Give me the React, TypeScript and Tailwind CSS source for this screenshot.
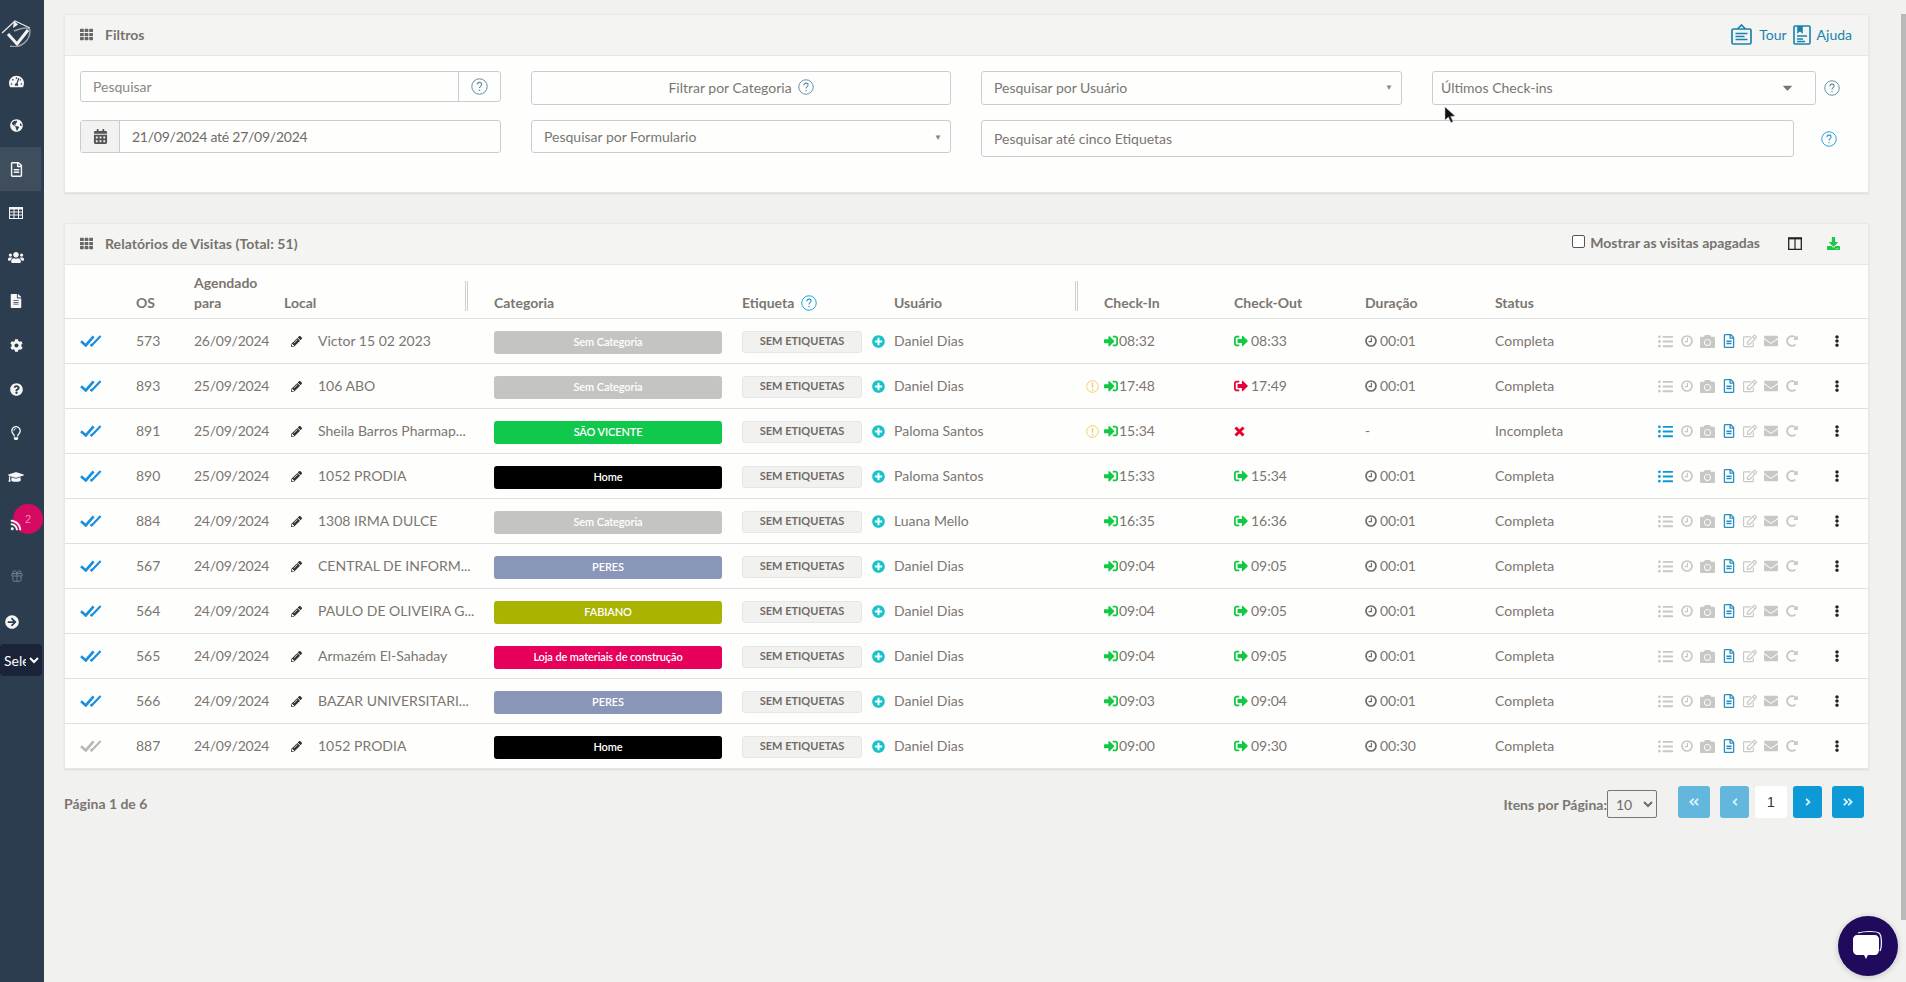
import React from "react";
import {
  FaTh, FaTachometerAlt, FaGlobeAmericas, FaRegFileAlt, FaUsers, FaFileAlt, FaCog, FaQuestionCircle,
  FaRegLightbulb, FaGraduationCap, FaRss, FaArrowCircleRight, FaCalendarAlt, FaPencilAlt, FaPlusCircle,
  FaSignInAlt, FaSignOutAlt, FaListUl, FaCamera, FaRegEdit, FaEnvelope, FaRedoAlt,
  FaEllipsisV, FaDownload, FaCaretDown, FaAngleDoubleLeft, FaAngleDoubleRight, FaAngleLeft, FaAngleRight,
} from "react-icons/fa";
import { Gift } from "lucide-react";

const cols = "grid grid-cols-[71px_58px_90px_210px_248px_152px_184px_26px_130px_131px_130px_160px_1fr]";

type Row = {
  os: string; date: string; name: string; cat: string; bar: string; user: string; warn?: boolean;
  inT: string; outT?: string; outRed?: boolean; dur: string; status: string; list?: boolean; grey?: boolean;
};

const GREY = "bg-[#c4c4c2]";
const rows: Row[] = [
  { os: "573", date: "26/09/2024", name: "Victor 15 02 2023", cat: "Sem Categoria", bar: GREY, user: "Daniel Dias", inT: "08:32", outT: "08:33", dur: "00:01", status: "Completa" },
  { os: "893", date: "25/09/2024", name: "106 ABO", cat: "Sem Categoria", bar: GREY, user: "Daniel Dias", warn: true, inT: "17:48", outT: "17:49", outRed: true, dur: "00:01", status: "Completa" },
  { os: "891", date: "25/09/2024", name: "Sheila Barros Pharmap...", cat: "SÃO VICENTE", bar: "bg-[#0fc84c]", user: "Paloma Santos", warn: true, inT: "15:34", dur: "-", status: "Incompleta", list: true },
  { os: "890", date: "25/09/2024", name: "1052 PRODIA", cat: "Home", bar: "bg-black", user: "Paloma Santos", inT: "15:33", outT: "15:34", dur: "00:01", status: "Completa", list: true },
  { os: "884", date: "24/09/2024", name: "1308 IRMA DULCE", cat: "Sem Categoria", bar: GREY, user: "Luana Mello", inT: "16:35", outT: "16:36", dur: "00:01", status: "Completa" },
  { os: "567", date: "24/09/2024", name: "CENTRAL DE INFORM...", cat: "PERES", bar: "bg-[#8a96b8]", user: "Daniel Dias", inT: "09:04", outT: "09:05", dur: "00:01", status: "Completa" },
  { os: "564", date: "24/09/2024", name: "PAULO DE OLIVEIRA G...", cat: "FABIANO", bar: "bg-[#a9b300]", user: "Daniel Dias", inT: "09:04", outT: "09:05", dur: "00:01", status: "Completa" },
  { os: "565", date: "24/09/2024", name: "Armazém El-Sahaday", cat: "Loja de materiais de construção", bar: "bg-[#e6005c]", user: "Daniel Dias", inT: "09:04", outT: "09:05", dur: "00:01", status: "Completa" },
  { os: "566", date: "24/09/2024", name: "BAZAR UNIVERSITARI...", cat: "PERES", bar: "bg-[#8a96b8]", user: "Daniel Dias", inT: "09:03", outT: "09:04", dur: "00:01", status: "Completa" },
  { os: "887", date: "24/09/2024", name: "1052 PRODIA", cat: "Home", bar: "bg-black", user: "Daniel Dias", inT: "09:00", outT: "09:30", dur: "00:30", status: "Completa", grey: true },
];

function Help({ className }: { className: string }) {
  return (
    <svg viewBox="0 0 17 17" className={className} fill="none" stroke="currentColor">
      <circle cx="8.5" cy="8.5" r="7.7" strokeWidth="1" />
      <path d="M6.3 6.6c0-1.4 1-2.2 2.2-2.2s2.2.8 2.2 2c0 1.6-2.2 1.8-2.2 3.6" strokeWidth="1.1" />
      <path d="M8.5 11.6v1.4" strokeWidth="1.2" />
    </svg>
  );
}

function Clock({ className }: { className: string }) {
  return (
    <svg viewBox="0 0 12 12" className={className} fill="none" stroke="currentColor">
      <circle cx="6" cy="6" r="5" strokeWidth="1.7" />
      <path d="M6.4 2.8V6.6H3.6" strokeWidth="1.2" />
    </svg>
  );
}

function DoubleCheck({ grey }: { grey?: boolean }) {
  return (
    <svg viewBox="0 0 22 12" className={`w-[22px] h-[12px] ${grey ? "text-[#b8b8b6]" : "text-[#1a8fe0]"}`} fill="none" stroke="currentColor">
      <path d="M1 6.2 L5.8 10.4 L13.6 1.4" strokeWidth="2.7" />
      <path d="M10.4 9.4 L11.6 10.4 L20.6 1" strokeWidth="2.2" />
    </svg>
  );
}

function Logo() {
  return (
    <svg viewBox="0 0 36 36" className="w-[36px] h-[36px]" fill="none">
      <path d="M2 22 L15 10 L30 17" stroke="#e8e8e8" strokeWidth="1.2" />
      <path d="M14 10 L18 13.5 L13 17 Z" fill="#f4f4f4" />
      <path d="M8 23 L17 33 L28 19" stroke="#f2f2f2" strokeWidth="3" />
      <path d="M10 35 C20 38 30 30 30 20 C30 16 24 16 14 20" stroke="#9aa3aa" strokeWidth="1.4" />
    </svg>
  );
}

function TourIcon() {
  return (
    <svg viewBox="0 0 21 21" className="w-[21px] h-[21px] text-[#1a82ad]" fill="none" stroke="currentColor" strokeWidth="1.7">
      <rect x="1" y="5" width="19" height="15" rx="1.5" />
      <path d="M6.5 5 L10.5 1 L14.5 5" />
      <path d="M4.5 9.5h12M4.5 12.5h9M4.5 15.5h12" strokeWidth="1.4" />
    </svg>
  );
}

function HelpDocIcon() {
  return (
    <svg viewBox="0 0 18 20" className="w-[18px] h-[20px] text-[#1a82ad]" fill="none" stroke="currentColor" strokeWidth="1.6">
      <rect x="1" y="1" width="16" height="18" rx="1" />
      <path d="M5 1v6l2-1.6L9 7V1" fill="currentColor" />
      <path d="M4 11h10M4 14h6M4 16.5h8" strokeWidth="1.3" />
    </svg>
  );
}

function TableGlyph() {
  return (
    <svg viewBox="0 0 14 12" className="w-[14px] h-[12px]" fill="none" stroke="#f6f6f6">
      <rect x="0.5" y="0.5" width="13" height="11" />
      <path d="M0 1.5h14" strokeWidth="2" />
      <path d="M0 5h14M0 8h14M5 1v10M9.5 1v10" />
    </svg>
  );
}

function ColumnsGlyph() {
  return (
    <svg viewBox="0 0 14 13" className="w-[14px] h-[13px] text-[#222]" fill="none" stroke="currentColor">
      <rect x="0.7" y="1" width="12.6" height="11.4" strokeWidth="1.3" />
      <path d="M0 1.5h14" strokeWidth="1.8" />
      <path d="M7 1v11" strokeWidth="1.2" />
    </svg>
  );
}

function SideItem({ children, active }: { children: React.ReactNode; active?: boolean }) {
  return (
    <div className={`h-[44px] w-[41px] pl-[8px] flex items-center ${active ? "bg-[#3f4e5d]" : ""}`}>
      <span className="w-[16px] flex justify-center">{children}</span>
    </div>
  );
}

function Sidebar() {
  const c = "text-[#f6f6f6] text-[14px]";
  return (
    <aside className="w-[44px] shrink-0 bg-[#2b3d4f] flex flex-col">
      <div className="h-[59px] pt-[11px]">
        <Logo />
      </div>
      <SideItem><FaTachometerAlt className="text-[#f6f6f6] text-[15px]" /></SideItem>
      <SideItem><FaGlobeAmericas className="text-[#f6f6f6] text-[13px]" /></SideItem>
      <SideItem active><FaRegFileAlt className="text-[#f6f6f6] text-[15px]" /></SideItem>
      <SideItem><TableGlyph /></SideItem>
      <SideItem><FaUsers className="text-[#f6f6f6] text-[17px]" /></SideItem>
      <SideItem><FaFileAlt className={c} /></SideItem>
      <SideItem><FaCog className="text-[#f6f6f6] text-[13px]" /></SideItem>
      <SideItem><FaQuestionCircle className="text-[#f6f6f6] text-[13px]" /></SideItem>
      <SideItem><FaRegLightbulb className={c} /></SideItem>
      <SideItem><FaGraduationCap className="text-[#f6f6f6] text-[18px]" /></SideItem>
      <div className="h-[44px] relative">
        <span className="absolute left-[13px] top-[5px] w-[30px] h-[30px] rounded-full bg-[#d60a62] text-[#f48ab8] text-[11px] flex items-center justify-center [font-family:'Liberation_Sans',sans-serif]">
          2
        </span>
        <FaRss className="absolute left-[10px] top-[20px] text-[#f6f6f6] text-[12px]" />
      </div>
      <div className="h-[44px] mt-[11px] pl-[10px] flex items-center">
        <Gift className="w-[14px] h-[14px] text-[#7e8b98]" strokeWidth={1.4} />
      </div>
      <div className="h-[44px] pl-[5px] flex items-center mt-[2px]">
        <FaArrowCircleRight className="text-[#f6f6f6] text-[14px]" />
      </div>
      <select className="block w-[42px] h-[32px] rounded-[4px] bg-[#1a2338] text-white text-[14px] p-0 outline-none [font-family:Lato,sans-serif]">
        <option>Selecione</option>
      </select>
    </aside>
  );
}

function FakeSelect({ label, h, lift }: { label: string; h: string; lift?: boolean }) {
  return (
    <div className={`${h} ${lift ? "pb-[2px]" : ""} flex items-center justify-between pl-[12px] pr-[8px] border border-[#c6ced3] rounded-[3px] text-[14px] text-[#7a7672] bg-[#fefefc]`}>
      <span>{label}</span>
      <span className="text-[#888] text-[8px]">▼</span>
    </div>
  );
}

function Filters() {
  return (
    <section className="border border-[#e8e8e6] rounded-[2px] bg-[#fefefc] shadow-[0_1px_2px_rgba(0,0,0,0.1)]">
      <header className="h-[41px] pb-[1px] bg-[#f4f4f2] border-b border-[#e6e6e4] flex items-center pl-[15px] pr-[16px]">
        <FaTh className="text-[#666] text-[13px] mr-[12px]" />
        <span className="text-[14px] font-bold text-[#77736e]">Filtros</span>
        <div className="ml-auto flex items-center text-[14px] text-[#1a82ad]">
          <TourIcon />
          <span className="ml-[7px] mr-[6px]">Tour</span>
          <HelpDocIcon />
          <span className="ml-[6px]">Ajuda</span>
        </div>
      </header>
      <div className="grid grid-cols-[421px_420px_421px_1fr] gap-x-[30px] gap-y-[15px] items-start pt-[15px] pl-[15px] pr-[20px] pb-[35px]">
        <div className="h-[31px] flex border border-[#c6ced3] rounded-[3px]">
          <input placeholder="Pesquisar" className="flex-1 min-w-0 pl-[12px] text-[14px] bg-transparent outline-none placeholder:text-[#8a8784]" />
          <span className="w-[42px] border-l border-[#c6ced3] flex items-center justify-center">
            <Help className="w-[17px] h-[17px] text-[#5f8ca3]" />
          </span>
        </div>
        <div className="h-[34px] pb-[2px] flex items-center justify-center gap-[6px] border border-[#c6ced3] rounded-[3px] text-[14px] text-[#7a7672]">
          Filtrar por Categoria
          <Help className="w-[16px] h-[16px] text-[#5f8ca3]" />
        </div>
        <FakeSelect label="Pesquisar por Usuário" h="h-[34px]" lift />
        <div className="flex items-center">
          <div className="w-[384px] h-[34px] pb-[2px] flex items-center justify-between pl-[8px] pr-[20px] border border-[#c6ced3] rounded-[3px] text-[14px] text-[#7a7672]">
            <span>Últimos Check-ins</span>
            <FaCaretDown className="text-[#777] text-[15px]" />
          </div>
          <Help className="ml-[8px] w-[16px] h-[16px] text-[#5f8ca3]" />
        </div>
        <div className="h-[33px] flex border border-[#c6ced3] rounded-[3px]">
          <span className="w-[39px] bg-[#f2f2f0] border-r border-[#c6ced3] flex items-center justify-center">
            <FaCalendarAlt className="text-[#555] text-[15px]" />
          </span>
          <input defaultValue="21/09/2024 até 27/09/2024" className="flex-1 min-w-0 pl-[12px] text-[14px] tracking-[-0.25px] text-[#6f6b67] bg-transparent outline-none" />
        </div>
        <FakeSelect label="Pesquisar por Formulario" h="h-[33px]" />
        <div className="col-span-2 flex items-center">
          <div className="w-[813px] h-[37px] flex items-center pl-[12px] border border-[#c6ced3] rounded-[3px] text-[14px] text-[#7a7672]">
            Pesquisar até cinco Etiquetas
          </div>
          <Help className="ml-[27px] w-[16px] h-[16px] text-[#1b9dd6]" />
        </div>
      </div>
    </section>
  );
}

function TableRow({ r }: { r: Row }) {
  const grey = "text-[#c8c8c6]";
  const tx = "pb-[2px]";
  return (
    <div className={`${cols} h-[45px] last:h-[44px] items-center border-b border-[#dfdfdd] last:border-b-0 text-[14px] text-[#7b7671]`}>
      <span className="pl-[15px] flex"><DoubleCheck grey={r.grey} /></span>
      <span className={tx}>{r.os}</span>
      <span className={`${tx} tracking-[-0.25px]`}>{r.date}</span>
      <span className="pl-[7px] flex items-center">
        <FaPencilAlt className="text-[#333] text-[11px] mr-[16px]" />
        <span className={tx}>{r.name}</span>
      </span>
      <span className={`${r.bar} h-[23px] w-[228px] mt-[2px] rounded-[3px] text-white text-[11px] font-semibold tracking-[-0.12px] flex items-center justify-center`}>{r.cat}</span>
      <span className="flex items-center">
        <span className="w-[120px] h-[22px] bg-[#f1f1ef] border border-[#e6e6e4] rounded-[3px] text-[11px] font-bold text-[#6f6b67] flex items-center justify-center mt-[1px]">
          SEM ETIQUETAS
        </span>
        <FaPlusCircle className="text-[#17c3c8] text-[13px] ml-[10px]" />
      </span>
      <span className={tx}>{r.user}</span>
      <span className="pl-[8px]">
        {r.warn && (
          <svg viewBox="0 0 13 13" className="w-[13px] h-[13px] text-[#f2cf6e]" fill="none" stroke="currentColor">
            <circle cx="6.5" cy="6.5" r="5.8" />
            <path d="M6.5 2.8v5M6.5 9v1.4" strokeWidth="1.5" />
          </svg>
        )}
      </span>
      <span className="flex items-center">
        <FaSignInAlt className="text-[#12c944] text-[14px] mr-[1px]" />
        <span className={tx}>{r.inT}</span>
      </span>
      <span className="flex items-center">
        {r.outT ? (
          <>
            <FaSignOutAlt className={`${r.outRed ? "text-[#e6003c]" : "text-[#12c944]"} text-[14px] mr-[3px]`} />
            <span className={tx}>{r.outT}</span>
          </>
        ) : (
          <svg viewBox="0 0 11 11" className="w-[11px] h-[11px] text-[#e6002e]" fill="none" stroke="currentColor">
            <path d="M1.5 1.5 L9.5 9.5 M9.5 1.5 L1.5 9.5" strokeWidth="3" />
          </svg>
        )}
      </span>
      <span className="flex items-center">
        {r.dur !== "-" && <Clock className="w-[12px] h-[12px] text-[#6f6b67] mr-[3px]" />}
        <span className={tx}>{r.dur}</span>
      </span>
      <span className={tx}>{r.status}</span>
      <span className="flex items-center">
        <span className="w-[21px] flex justify-center"><FaListUl className={`${r.list ? "text-[#0c9ad6]" : grey} text-[15px]`} /></span>
        <span className="w-[21px] flex justify-center"><Clock className={`w-[12px] h-[12px] ${grey}`} /></span>
        <span className="w-[21px] flex justify-center"><FaCamera className={`${grey} text-[15px]`} /></span>
        <span className="w-[21px] flex justify-center"><FaRegFileAlt className="text-[#2a8fc0] text-[14px]" /></span>
        <span className="w-[21px] flex justify-center"><FaRegEdit className={`${grey} text-[14px]`} /></span>
        <span className="w-[21px] flex justify-center"><FaEnvelope className={`${grey} text-[14px]`} /></span>
        <span className="w-[21px] flex justify-center"><FaRedoAlt className={`${grey} text-[12px]`} /></span>
        <span className="ml-[29px] w-[12px] flex justify-center"><FaEllipsisV className="text-[#222] text-[12px]" /></span>
      </span>
    </div>
  );
}

function Report() {
  const hd = "font-bold text-[14px] text-[#7b7671]";
  return (
    <section className="mt-[30px] border border-[#e8e8e6] rounded-[2px] bg-[#fefefc] shadow-[0_1px_2px_rgba(0,0,0,0.1)]">
      <header className="h-[41px] pb-[1px] bg-[#f4f4f2] border-b border-[#e6e6e4] flex items-center pl-[15px] pr-[28px]">
        <FaTh className="text-[#666] text-[13px] mr-[12px]" />
        <span className="text-[14px] font-bold text-[#77736e] tracking-[0.06px]">Relatórios de Visitas (Total: 51)</span>
        <label className="ml-auto flex items-center text-[14px] font-bold text-[#77736e] mr-[28px] mb-[2px]">
          <span className="w-[13px] h-[13px] border border-[#555] rounded-[2px] bg-white mr-[5px] mb-[2px]" />
          Mostrar as visitas apagadas
        </label>
        <span className="mr-[25px] flex"><ColumnsGlyph /></span>
        <FaDownload className="text-[#1ec746] text-[13px]" />
      </header>
      <div className={`${cols} h-[54px] items-end pb-[5px] border-b border-[#dfdfdd] ${hd}`}>
        <span />
        <span className="leading-[20px]">OS</span>
        <span className="leading-[20px]">Agendado<br />para</span>
        <span className="leading-[20px] relative">
          Local
          <span className="absolute left-[181px] bottom-[2px] h-[30px] w-[3px] border-x border-[#cfcfcd]" />
        </span>
        <span className="leading-[20px]">Categoria</span>
        <span className="leading-[20px] flex items-center">
          Etiqueta
          <Help className="ml-[7px] w-[16px] h-[16px] text-[#1b9dd6]" />
        </span>
        <span className="leading-[20px] relative">
          Usuário
          <span className="absolute left-[181px] bottom-[2px] h-[30px] w-[3px] border-x border-[#cfcfcd]" />
        </span>
        <span />
        <span className="leading-[20px]">Check-In</span>
        <span className="leading-[20px]">Check-Out</span>
        <span className="leading-[20px]">Duração</span>
        <span className="leading-[20px]">Status</span>
        <span />
      </div>
      {rows.map((r) => (
        <TableRow key={r.os} r={r} />
      ))}
    </section>
  );
}

function PageBtn({ children, off, w }: { children: React.ReactNode; off?: boolean; w: string }) {
  return (
    <span className={`${w} h-[32px] rounded-[3px] ${off ? "bg-[#64b7dc]" : "bg-[#0d9ad6]"} text-[#d5f2fb] text-[12px] flex items-center justify-center`}>
      {children}
    </span>
  );
}

function Footer() {
  return (
    <div className="mt-[17px] flex items-start text-[#7b7671] text-[14px] font-bold">
      <span className="mt-[7px]">Página 1 de 6</span>
      <div className="ml-auto flex items-start mr-[5px]">
        <span className="mt-[8px]">Itens por Página:</span>
        <select className="mt-[4px] w-[50px] h-[28px] border border-[#777] rounded-[2px] font-normal text-[#6f6b67] text-[14px] bg-[#f1f1ef] pl-[4px]">
          <option>10</option>
        </select>
        <div className="ml-[21px] flex items-center">
          <PageBtn off w="w-[32px]"><FaAngleDoubleLeft /></PageBtn>
          <span className="w-[10px]" />
          <PageBtn off w="w-[29px]"><FaAngleLeft /></PageBtn>
          <span className="w-[6px]" />
          <span className="w-[32px] h-[32px] bg-white rounded-[3px] text-[14px] font-normal text-[#333] flex items-center justify-center [font-family:'Liberation_Sans',sans-serif]">1</span>
          <span className="w-[6px]" />
          <PageBtn w="w-[29px]"><FaAngleRight /></PageBtn>
          <span className="w-[10px]" />
          <PageBtn w="w-[32px]"><FaAngleDoubleRight /></PageBtn>
        </div>
      </div>
    </div>
  );
}

export default function App() {
  return (
    <div className="min-h-screen h-[982px] overflow-hidden flex bg-[#f1f1ef] [font-family:Lato,sans-serif] relative">
      <Sidebar />
      <main className="flex-1 min-w-0 pt-[14px] pl-[20px] pr-[37px]">
        <Filters />
        <Report />
        <Footer />
      </main>
      <div className="absolute right-0 top-[14px] w-[5px] h-[906px] bg-[#b9b9b9]" />
      <svg viewBox="0 0 13 20" className="absolute left-[1444px] top-[106px] w-[13px] h-[20px]">
        <path d="M1 1 L1 14 L4.4 11 L7 16.5 L9 15.5 L6.6 10.4 L11 10 Z" fill="#111" stroke="#bbb" strokeWidth="0.5" />
      </svg>
      <div className="absolute left-[1838px] top-[916px] w-[60px] h-[60px] rounded-full bg-[#1f0a5c] shadow-[0_1px_6px_rgba(0,0,0,0.2)] flex items-center justify-center">
        <svg viewBox="0 0 32 32" className="w-[32px] h-[32px]" fill="none">
          <path d="M6 3 C12 1 24 1 27 3 C30 5 30 17 28 21" stroke="#fff" strokeWidth="1.2" />
          <path d="M5 5 H23 C25 5 27 7 27 9 V20 C27 23 25 25 23 25 H16 L14 29 L12 25 H6 C3 25 1 23 1 20 V9 C1 7 3 5 5 5 Z" fill="#fff" />
        </svg>
      </div>
    </div>
  );
}
